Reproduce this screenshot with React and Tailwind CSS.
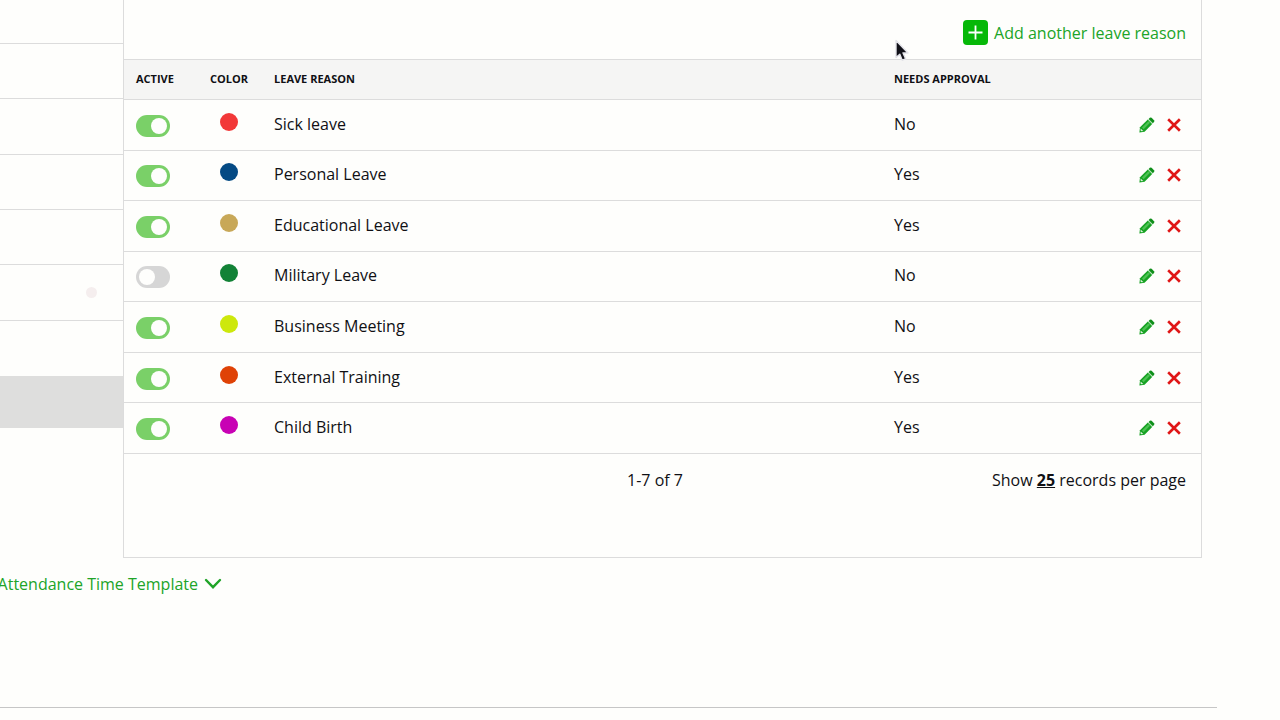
import React, { useState } from 'react';

const initialReasons = [
  { name: 'Sick leave', dot: 'bg-[#f23838]', approval: 'No', active: true },
  { name: 'Personal Leave', dot: 'bg-[#044a84]', approval: 'Yes', active: true },
  { name: 'Educational Leave', dot: 'bg-[#c8a858]', approval: 'Yes', active: true },
  { name: 'Military Leave', dot: 'bg-[#128236]', approval: 'No', active: false },
  { name: 'Business Meeting', dot: 'bg-[#cde80c]', approval: 'No', active: true },
  { name: 'External Training', dot: 'bg-[#df4206]', approval: 'Yes', active: true },
  { name: 'Child Birth', dot: 'bg-[#c802b4]', approval: 'Yes', active: true },
];

function PencilIcon() {
  return (
    <svg width="16" height="16" viewBox="0 0 16 16" aria-hidden="true">
      <path d="M0.4 15.4 1 10.2 8.8 2.6 13.2 7 5.6 14.8Z" fill="#17a223" />
      <path d="M3 10.4 9.4 4.2l1.6 1.6-6.4 6.4Z" fill="#4cc252" />
      <path d="M9.6 1.9 10.8 0.8q.9-.7 1.8 0L15 3.2q.8.9 0 1.8L13.8 6.2Z" fill="#0f8f1a" />
      <path d="M9.2 2.4 13.4 6.6" stroke="#8fd692" strokeWidth="0.7" />
      <path d="M1.7 11.6 4.3 14.1 2.5 14.3 1.5 13.4Z" fill="#dcf3da" />
    </svg>
  );
}

function CrossIcon() {
  return (
    <svg width="14" height="14" viewBox="0 0 14 14" aria-hidden="true">
      <path d="M2.1 2.2 11.9 11.8M11.9 2.2 2.1 11.8" stroke="#e01616" strokeWidth="2.6" strokeLinecap="square" />
    </svg>
  );
}

function Toggle({ label, checked, onChange }) {
  return (
    <input
      type="checkbox"
      aria-label={label}
      checked={checked}
      onChange={onChange}
      className="flex h-[22px] w-[34px] cursor-pointer appearance-none items-center rounded-full bg-[#d6d6d6] px-[3px] before:block before:size-4 before:rounded-full before:bg-[#fefefc] checked:justify-end checked:bg-[#7ad068]"
    />
  );
}

function Sidebar() {
  return (
    <aside className="w-[123px] shrink-0">
      <div className="h-11 border-b border-[#dcdcdc]" />
      <div className="grid h-[332px] grid-rows-6">
        <div className="border-b border-[#dcdcdc]" />
        <div className="border-b border-[#dcdcdc]" />
        <div className="border-b border-[#dcdcdc]" />
        <div className="border-b border-[#dcdcdc]" />
        <div className="flex items-center justify-end border-b border-[#dcdcdc] pr-[26px]">
          <span className="size-[11px] rounded-full bg-[#f5eeee]" />
        </div>
        <div />
      </div>
      <div className="h-[52px] bg-[#dededd]" />
    </aside>
  );
}

function ReasonTable({ reasons, onToggle }) {
  return (
    <table className="h-[395px] w-full table-fixed border-separate border-spacing-0 text-left">
      <colgroup>
        <col className="w-[74px]" />
        <col className="w-[62px]" />
        <col />
        <col className="w-[200px]" />
        <col className="w-[121px]" />
      </colgroup>
      <thead className="bg-[#f5f5f4] text-[11px] leading-4">
        <tr>
          <th className="h-[41px] border-y border-[#dcdcdc] pb-0.5 pl-3 font-bold">ACTIVE</th>
          <th className="border-y border-[#dcdcdc] pb-0.5 text-center font-bold">COLOR</th>
          <th className="border-y border-[#dcdcdc] pb-0.5 pl-3.5 font-bold">LEAVE REASON</th>
          <th className="border-y border-[#dcdcdc] pb-0.5 pl-3.5 font-bold">NEEDS APPROVAL</th>
          <th aria-label="Actions" className="border-y border-[#dcdcdc]" />
        </tr>
      </thead>
      <tbody className="text-base leading-6">
        {reasons.map((reason, index) => (
          <tr key={reason.name}>
            <td className="border-b border-[#dcdcdc] pt-0.5 pl-3">
              <Toggle
                label={`${reason.name} active`}
                checked={reason.active}
                onChange={() => onToggle(index)}
              />
            </td>
            <td className="border-b border-[#dcdcdc] pb-1.5">
              <span className={`mx-auto block size-[18px] rounded-full ${reason.dot}`} />
            </td>
            <td className="border-b border-[#dcdcdc] pb-0.5 pl-3.5">{reason.name}</td>
            <td className="border-b border-[#dcdcdc] pb-0.5 pl-3.5">{reason.approval}</td>
            <td className="border-b border-[#dcdcdc] pr-5">
              <div className="flex items-center justify-end gap-3">
                <button type="button" aria-label={`Edit ${reason.name}`}>
                  <PencilIcon />
                </button>
                <button type="button" aria-label={`Delete ${reason.name}`}>
                  <CrossIcon />
                </button>
              </div>
            </td>
          </tr>
        ))}
      </tbody>
    </table>
  );
}

function Cursor() {
  return (
    <svg
      className="pointer-events-none absolute top-[38px] left-[893px]"
      width="18"
      height="25"
      viewBox="0 0 18 25"
      aria-hidden="true"
    >
      <path
        d="M3 2.5V19.6L6.8 16.2 9.2 22.2 12.6 20.8 10 15H15Z"
        fill="#111118"
        stroke="#e4e4ea"
        strokeWidth="1.4"
        strokeLinejoin="round"
      />
    </svg>
  );
}

export default function App() {
  const [reasons, setReasons] = useState(initialReasons);
  const toggle = (index) =>
    setReasons(reasons.map((r, i) => (i === index ? { ...r, active: !r.active } : r)));

  return (
    <div className="relative min-h-screen bg-[#fefefc] font-['Open_Sans',sans-serif] text-[#101014]">
      <div className="flex pr-[78px]">
        <Sidebar />
        <main className="min-w-0 flex-1 border-x border-b border-[#dcdcdc] pb-[51px]">
          <div className="flex h-[59px] items-center justify-end pt-1.5 pr-[15px]">
            <button type="button" className="flex items-center gap-1.5 text-base leading-6 text-[#20a428]">
              <span className="flex size-[25px] items-center justify-center rounded bg-[#06b808]">
                <svg width="15" height="15" viewBox="0 0 15 15" aria-hidden="true">
                  <path d="M7.5 0.5v14M0.5 7.5h14" stroke="#fff" strokeWidth="1.8" />
                </svg>
              </span>
              Add another leave reason
            </button>
          </div>
          <ReasonTable reasons={reasons} onToggle={toggle} />
          <div className="grid h-[52px] grid-cols-[1fr_auto_1fr] items-center pr-[15px] text-base leading-6">
            <span />
            <span>1-7 of 7</span>
            <span className="text-right">
              Show <button type="button" className="font-bold underline">25</button> records per page
            </span>
          </div>
        </main>
      </div>
      <div className="flex w-[222px] justify-end pt-3.5">
        <button
          type="button"
          className="flex items-center gap-1.5 text-base leading-6 whitespace-nowrap text-[#20a428]"
        >
          Attendance Time Template
          <svg width="18" height="12" viewBox="0 0 18 12" aria-hidden="true">
            <path d="M2 2 9 9.2 16 2" fill="none" stroke="#20a428" strokeWidth="2.4" strokeLinecap="round" />
          </svg>
        </button>
      </div>
      <footer className="pt-[111px] pr-[63px]">
        <hr className="border-[#c6c6c6]" />
      </footer>
      <Cursor />
    </div>
  );
}
